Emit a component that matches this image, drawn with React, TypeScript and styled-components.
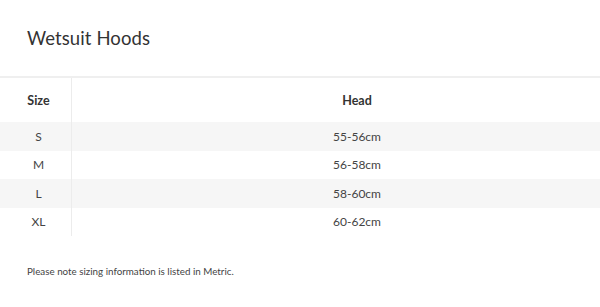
import React from "react";
import styled, { createGlobalStyle } from "styled-components";

const Global = createGlobalStyle`
  html, body { margin: 0; padding: 0; background: #fff; }
  body { font-family: Lato, "Open Sans", Arial, sans-serif; color: #333; }
`;

const Page = styled.div`
  width: 600px;
  height: 307px;
  overflow: hidden;
  display: flex;
  flex-direction: column;
`;

const Title = styled.h2`
  margin: 0;
  padding: 26px 0 0 27px;
  height: 76px;
  box-sizing: border-box;
  font-size: 18.5px;
  font-weight: 400;
  line-height: 24px;
  color: #333;
  letter-spacing: 0.1px;
`;

const Table = styled.div`
  border-top: 2px solid #efefef;
  display: grid;
  grid-template-columns: 72px 1fr;
`;

const Cell = styled.div<{ $head?: boolean; $stripe?: boolean; $first?: boolean }>`
  height: ${(p) => (p.$head ? "44px" : "28.5px")};
  display: flex;
  align-items: center;
  justify-content: center;
  box-sizing: border-box;
  padding-left: ${(p) => (p.$first ? "6px" : "42px")};
  background: ${(p) => (p.$stripe ? "#f6f6f6" : "#fff")};
  border-right: ${(p) => (p.$first ? "1px solid #ececec" : "none")};
  font-size: ${(p) => (p.$head ? "12.5px" : "12px")};
  font-weight: ${(p) => (p.$head ? 700 : 400)};
  color: ${(p) => (p.$head ? "#333" : "#444")};
`;

const Note = styled.p`
  margin: 29px 0 0 27px;
  font-size: 9.8px;
  line-height: 12px;
  color: #444;
`;

const rows = [
  ["S", "55-56cm"],
  ["M", "56-58cm"],
  ["L", "58-60cm"],
  ["XL", "60-62cm"],
];

export default function App() {
  return (
    <Page>
      <Global />
      <Title>Wetsuit Hoods</Title>
      <Table>
        <Cell $head $first>Size</Cell>
        <Cell $head>Head</Cell>
        {rows.map(([s, h], i) => (
          <React.Fragment key={s}>
            <Cell $first $stripe={i % 2 === 0}>{s}</Cell>
            <Cell $stripe={i % 2 === 0}>{h}</Cell>
          </React.Fragment>
        ))}
      </Table>
      <Note>Please note sizing information is listed in Metric.</Note>
    </Page>
  );
}
